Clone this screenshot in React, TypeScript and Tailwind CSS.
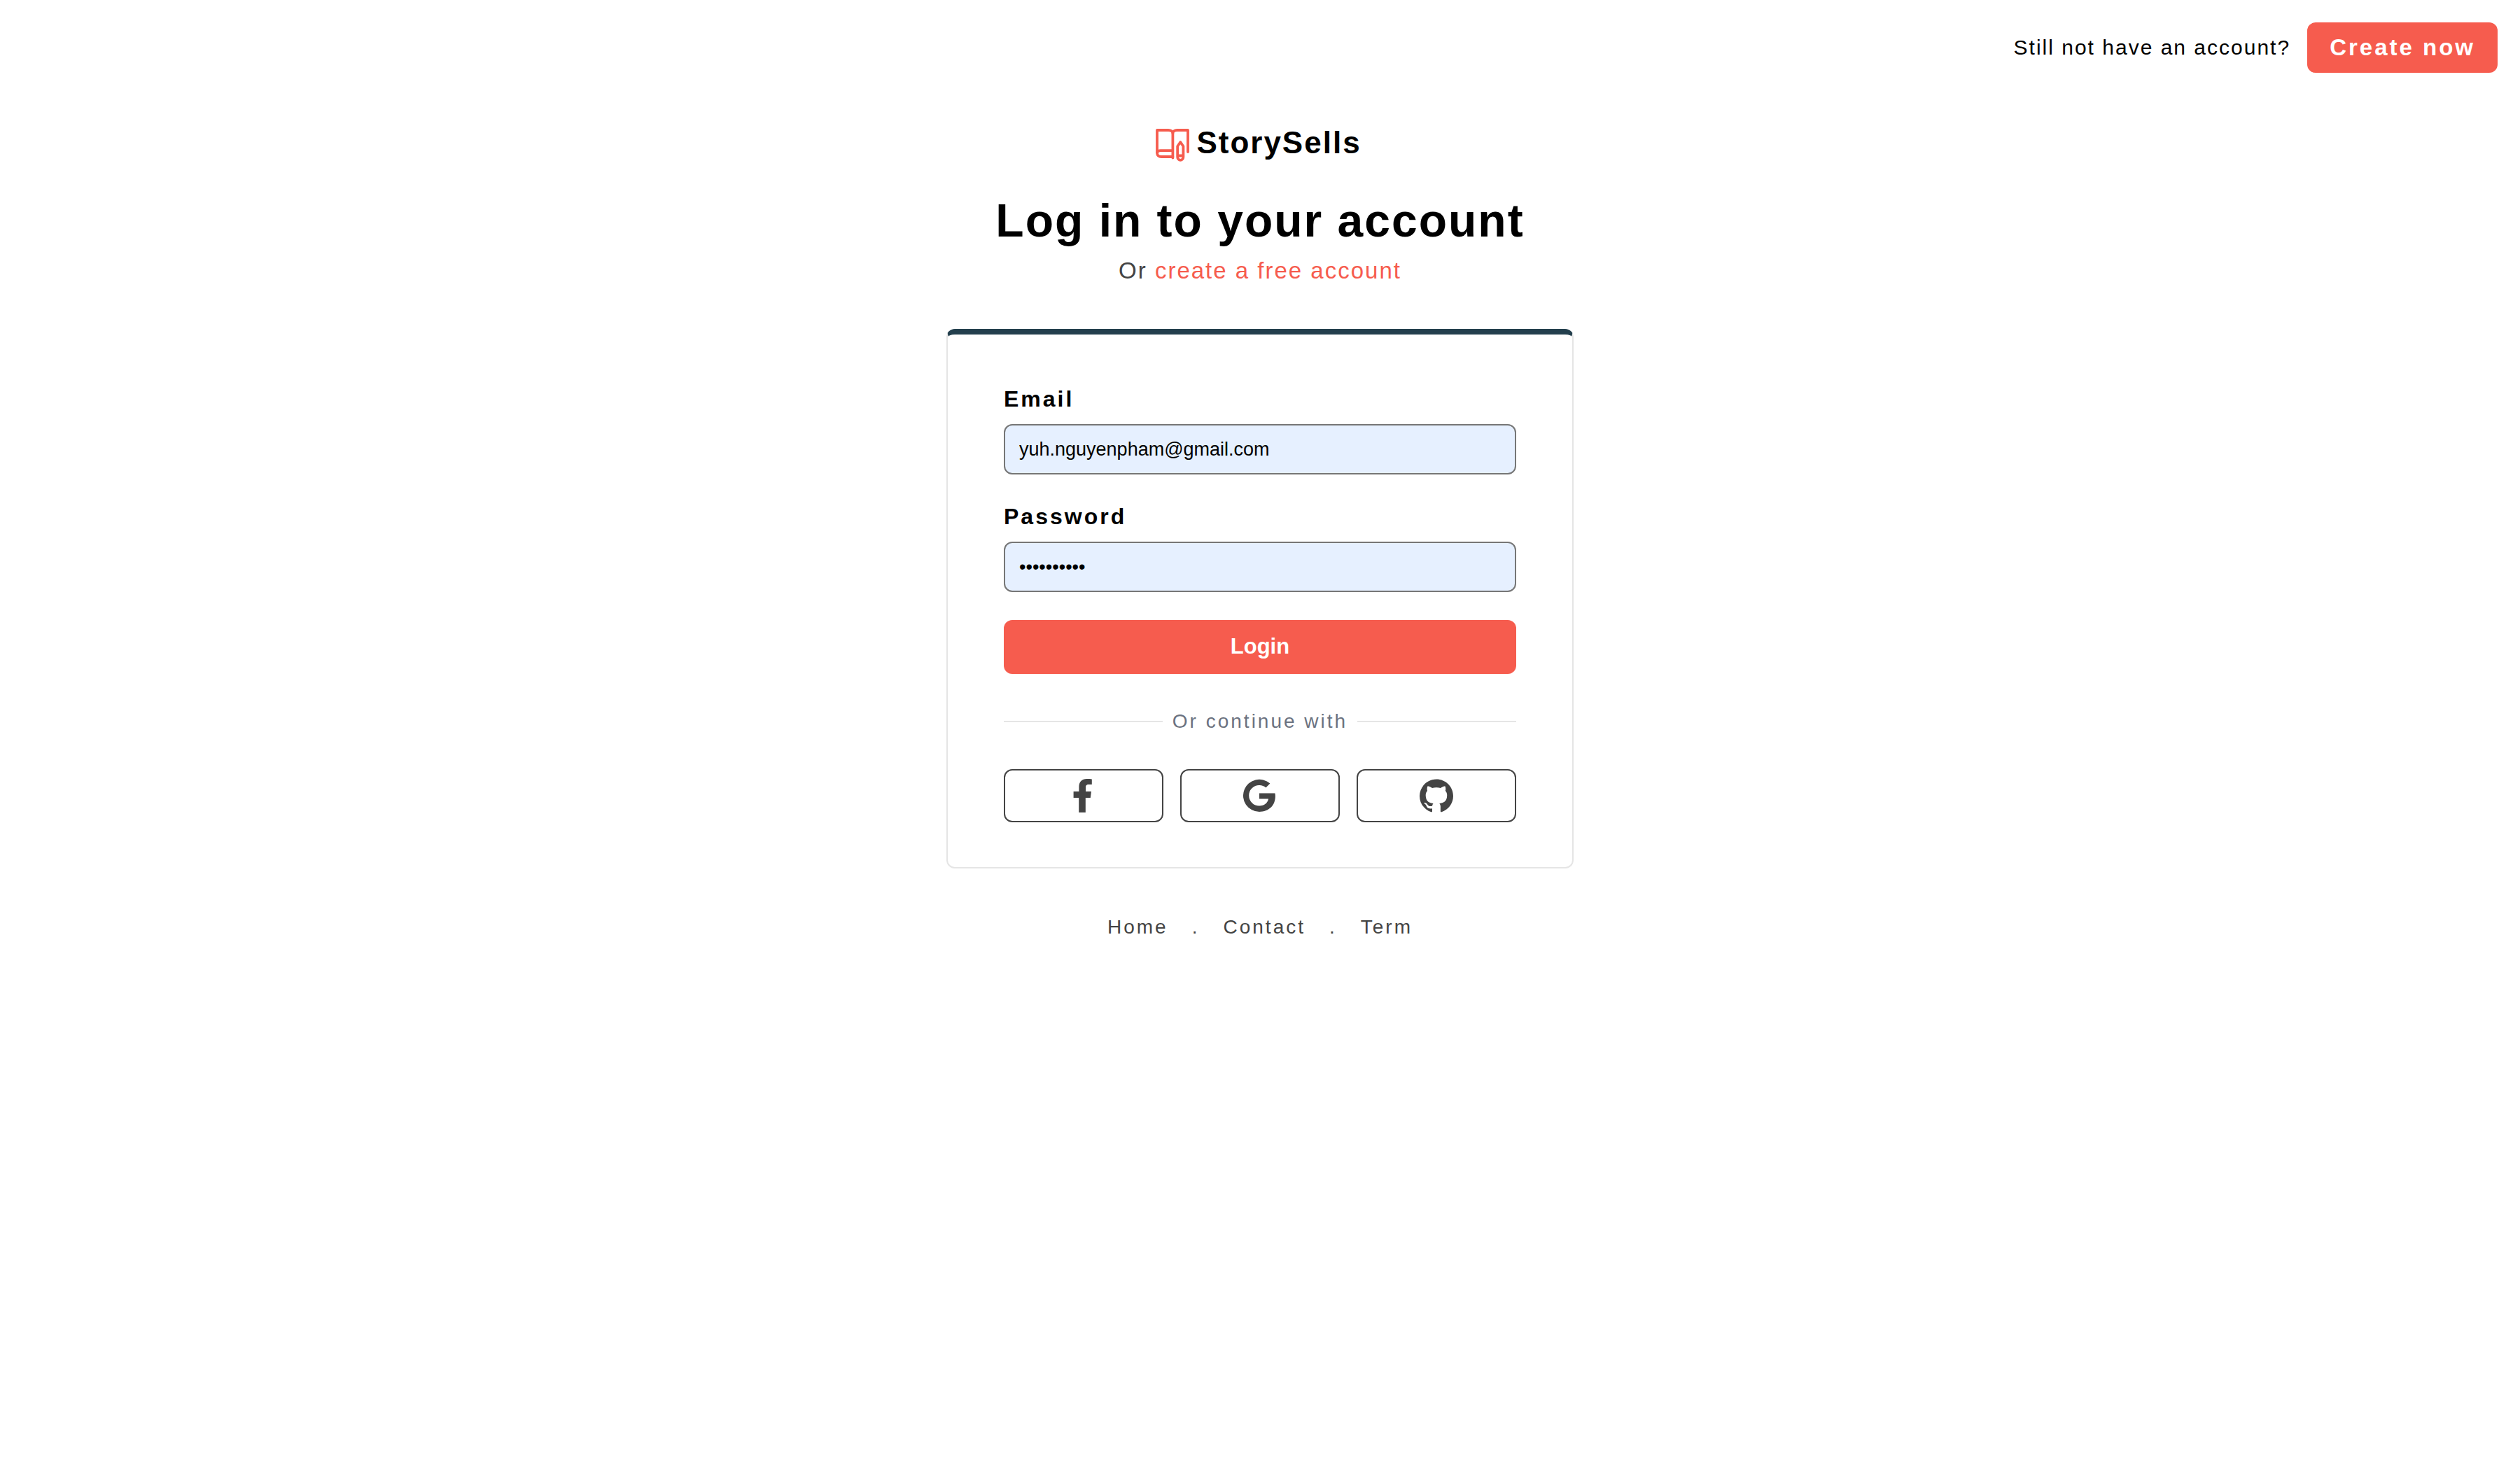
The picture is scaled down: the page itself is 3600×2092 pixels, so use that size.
import React from "react";
import { SiGithub } from "react-icons/si";

type IconProps = { className?: string };

function LogoMark() {
  return (
    <svg viewBox="0 0 48 48" className="size-12" fill="none" stroke="#f65c4e" strokeWidth="3.8" strokeLinecap="round" strokeLinejoin="round" aria-hidden="true">
      <path d="M46 33V2H30.500C27 2 24.400 3.700 24.400 6.500C24.400 3.700 21.400 2 18 2H2V34.500C2 38 4.500 40 8 40H24.400V41.500" />
      <path d="M24.400 6.500V40M2 34C3 31.600 4.500 31.200 7 31.200H24" />
      <path d="M31.200 25L35.300 19L39.400 25V40.500A4.100 4.300 0 0 1 31.200 40.500ZM31.500 38.500H39" />
    </svg>
  );
}

function FacebookIcon({ className }: IconProps) {
  return (
    <svg viewBox="0 0 24 24" className={className} fill="currentColor" aria-hidden="true">
      <path d="M17.900 .2V4H15.700C13.900 4 13.500 4.900 13.500 6.200V9H17.500L16.900 13.500H13.400V24H8.600V13.500H4.800V9H8.700V5.600C8.700 2 10.900 0 14.200 0C15.800 0 17.200 .1 17.900 .2Z" />
    </svg>
  );
}

function GoogleIcon({ className }: IconProps) {
  return (
    <svg viewBox="0 0 24 24" className={className} fill="currentColor" aria-hidden="true">
      <path d="M11.500 10.200H22.700C22.850 10.900 22.950 11.500 22.950 12.300C22.950 19 18.400 23.500 11.500 23.500A11.550 11.550 0 1 1 19.200 3.300L16.200 6.300C15 5.200 13.400 4.500 11.500 4.500A7.400 7.400 0 1 0 11.500 19.300C15.300 19.300 17.600 17 18 14.300H11.500Z" />
    </svg>
  );
}

const labelClass = "block text-[32px] leading-[48px] font-bold tracking-[3px]";
const fieldClass =
  "mt-3 block h-[72px] w-full rounded-xl border-2 border-[#767676] bg-[#e6f0ff] px-5 text-[27px] text-black outline-none";

const socials = [
  { name: "Facebook", Icon: FacebookIcon },
  { name: "Google", Icon: GoogleIcon },
  { name: "GitHub", Icon: SiGithub },
];

export default function App() {
  return (
    <div className="min-h-screen bg-white pb-16 font-['Liberation_Sans',Arial,sans-serif] text-black">
      <header className="flex items-center justify-end gap-6 px-8 pt-8">
        <p className="text-[30px] leading-10 tracking-[2px]">Still not have an account?</p>
        <button type="button" className="h-[72px] rounded-xl bg-[#f65c4e] px-8 text-[33px] font-bold tracking-[3px] text-white">
          Create now
        </button>
      </header>

      <main className="mx-auto flex w-full max-w-[896px] flex-col items-center pt-[72px]">
        <a href="#" className="flex h-14 items-end gap-2.5 pr-1">
          <LogoMark />
          <span className="text-[44px] leading-[56px] font-bold tracking-[2px]">StorySells</span>
        </a>
        <h1 className="mt-12 text-center text-[66px] leading-[70px] font-bold tracking-[2px]">Log in to your account</h1>
        <p className="mt-4 text-center text-[33px] leading-[42px] tracking-[2px] text-[#444444]">
          Or{" "}
          <a href="#" className="text-[#f65c4e]">
            create a free account
          </a>
        </p>

        <section className="mt-[62px] w-full rounded-xl border-2 border-t-8 border-[#e5e5e5] border-t-[#233f4d] px-20 pt-[68px] pb-16">
          <form onSubmit={(e) => e.preventDefault()}>
            <label htmlFor="email" className={labelClass}>
              Email
            </label>
            <input id="email" type="email" defaultValue="yuh.nguyenpham@gmail.com" className={fieldClass} />
            <label htmlFor="password" className={`${labelClass} mt-9`}>
              Password
            </label>
            <input id="password" type="password" defaultValue="storysells" className={fieldClass} />
            <button type="submit" className="mt-10 h-[77px] w-full rounded-xl bg-[#f65c4e] text-[31px] font-bold text-white">
              Login
            </button>
          </form>

          <div className="mt-12 flex items-center gap-3.5">
            <span className="h-0.5 flex-1 bg-[#e5e5e5]" />
            <span className="text-[28px] leading-10 tracking-[3px] text-[#6b7280]">Or continue with</span>
            <span className="h-0.5 flex-1 bg-[#e5e5e5]" />
          </div>

          <div className="mt-12 grid grid-cols-3 gap-6">
            {socials.map(({ name, Icon }) => (
              <button key={name} type="button" aria-label={`Continue with ${name}`} className="flex h-[76px] items-center justify-center rounded-xl border-2 border-[#444444] text-[#444444]">
                <Icon className="size-12" />
              </button>
            ))}
          </div>
        </section>

        <nav className="mt-16 flex gap-[34px] text-[28px] leading-10 tracking-[3px] text-[#444444]">
          <a href="#">Home</a>
          <span>.</span>
          <a href="#">Contact</a>
          <span>.</span>
          <a href="#">Term</a>
        </nav>
      </main>
    </div>
  );
}
